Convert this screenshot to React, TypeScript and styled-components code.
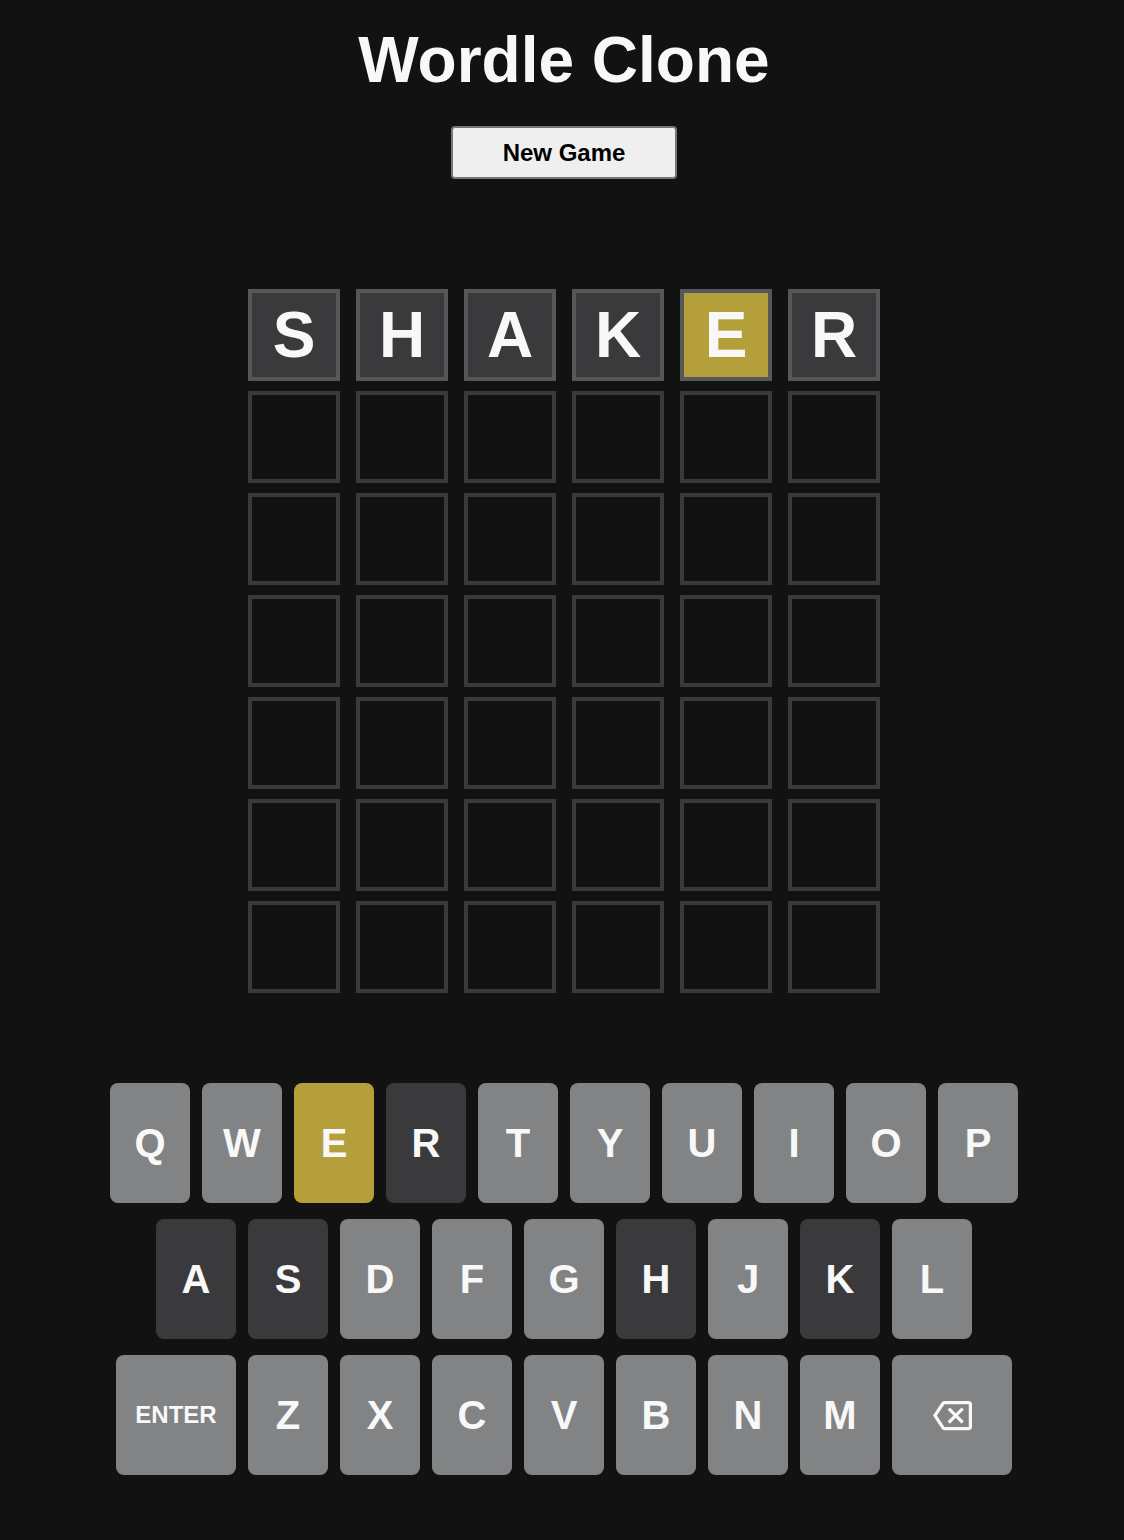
import React from "react";
import styled, { createGlobalStyle, css } from "styled-components";

const GlobalStyle = createGlobalStyle`
  html, body {
    margin: 0;
    padding: 0;
    background: #121212;
  }
  body {
    font-family: "Liberation Sans", Arial, Helvetica, sans-serif;
    color: #f8f8f8;
  }
`;

type TileState = "empty" | "absent" | "present";
type KeyState = "unused" | "absent" | "present";

const Page = styled.main`
  display: flex;
  flex-direction: column;
  align-items: center;
  width: 1124px;
  min-height: 1540px;
  box-sizing: border-box;
  padding-left: 4px;
`;

const Title = styled.h1`
  margin: 23px 0 0;
  font-size: 64px;
  font-weight: 700;
  line-height: normal;
  color: #f8f8f8;
`;

const NewGameButton = styled.button`
  margin-top: 29px;
  width: 226px;
  height: 53px;
  padding: 0;
  box-sizing: border-box;
  background: #efefef;
  border: 2px solid #767676;
  border-radius: 4px;
  font-family: "Liberation Sans", Arial, sans-serif;
  font-size: 24px;
  font-weight: 700;
  color: #000;
  cursor: pointer;
`;

const Board = styled.div`
  margin-top: 110px;
  display: grid;
  grid-template-columns: repeat(6, 92px);
  grid-auto-rows: 92px;
  column-gap: 16px;
  row-gap: 10px;
`;

const tileStyles: Record<TileState, ReturnType<typeof css>> = {
  empty: css`
    background: #121212;
    border-color: #3a3a3c;
  `,
  absent: css`
    background: #3a3a3c;
    border-color: #565758;
  `,
  present: css`
    background: #b59f3b;
    border-color: #565758;
  `,
};

const Tile = styled.div<{ $state: TileState }>`
  box-sizing: border-box;
  width: 92px;
  height: 92px;
  border: 4px solid;
  display: flex;
  align-items: center;
  justify-content: center;
  font-size: 64px;
  font-weight: 700;
  color: #f8f8f8;
  ${(p) => tileStyles[p.$state]}
`;

const Keyboard = styled.div`
  margin-top: 90px;
  display: flex;
  flex-direction: column;
  align-items: center;
  gap: 16px;
`;

const KeyRow = styled.div`
  display: flex;
  gap: 12px;
`;

const keyColors: Record<KeyState, string> = {
  unused: "#818384",
  absent: "#3a3a3c",
  present: "#b59f3b",
};

const Key = styled.button<{ $state: KeyState; $wide?: boolean }>`
  width: ${(p) => (p.$wide ? "120px" : "80px")};
  height: 120px;
  padding: 0;
  border: none;
  border-radius: 8px;
  background: ${(p) => keyColors[p.$state]};
  color: #f8f8f8;
  font-family: "Liberation Sans", Arial, sans-serif;
  font-size: ${(p) => (p.$wide ? "24px" : "40px")};
  font-weight: 700;
  display: flex;
  align-items: center;
  justify-content: center;
  cursor: pointer;
`;

const BackspaceIcon = () => (
  <svg width="39" height="39" viewBox="0 0 24 24" fill="#f8f8f8" aria-hidden="true">
    <path d="M22 3H7c-.69 0-1.23.35-1.59.88L0 12l5.41 8.11c.36.53.9.89 1.59.89h15c1.1 0 2-.9 2-2V5c0-1.1-.9-2-2-2zm0 16H7.07L2.4 12l4.66-7H22v14zm-11.59-2L14 13.41 17.590 17 19 15.59 15.41 12 19 8.41 17.59 7 14 10.59 10.41 7 9 8.41 12.59 12 9 15.59z" />
  </svg>
);

const guess = "SHAKER";
const guessStates: TileState[] = ["absent", "absent", "absent", "absent", "present", "absent"];

const keyStates: Record<string, KeyState> = {
  E: "present",
  R: "absent",
  A: "absent",
  S: "absent",
  H: "absent",
  K: "absent",
};

const rows = ["QWERTYUIOP", "ASDFGHJKL", "ZXCVBNM"];

export default function App() {
  const tiles: React.ReactNode[] = [];
  for (let r = 0; r < 7; r++) {
    for (let c = 0; c < 6; c++) {
      if (r === 0) {
        tiles.push(
          <Tile key={`${r}-${c}`} $state={guessStates[c]}>
            {guess[c]}
          </Tile>
        );
      } else {
        tiles.push(<Tile key={`${r}-${c}`} $state="empty" />);
      }
    }
  }

  return (
    <>
      <GlobalStyle />
      <Page>
        <Title>Wordle Clone</Title>
        <NewGameButton>New Game</NewGameButton>
        <Board>{tiles}</Board>
        <Keyboard>
          {rows.map((row, i) => (
            <KeyRow key={row}>
              {i === 2 && (
                <Key $state="unused" $wide>
                  ENTER
                </Key>
              )}
              {row.split("").map((ch) => (
                <Key key={ch} $state={keyStates[ch] ?? "unused"}>
                  {ch}
                </Key>
              ))}
              {i === 2 && (
                <Key $state="unused" $wide aria-label="Backspace">
                  <BackspaceIcon />
                </Key>
              )}
            </KeyRow>
          ))}
        </Keyboard>
      </Page>
    </>
  );
}
